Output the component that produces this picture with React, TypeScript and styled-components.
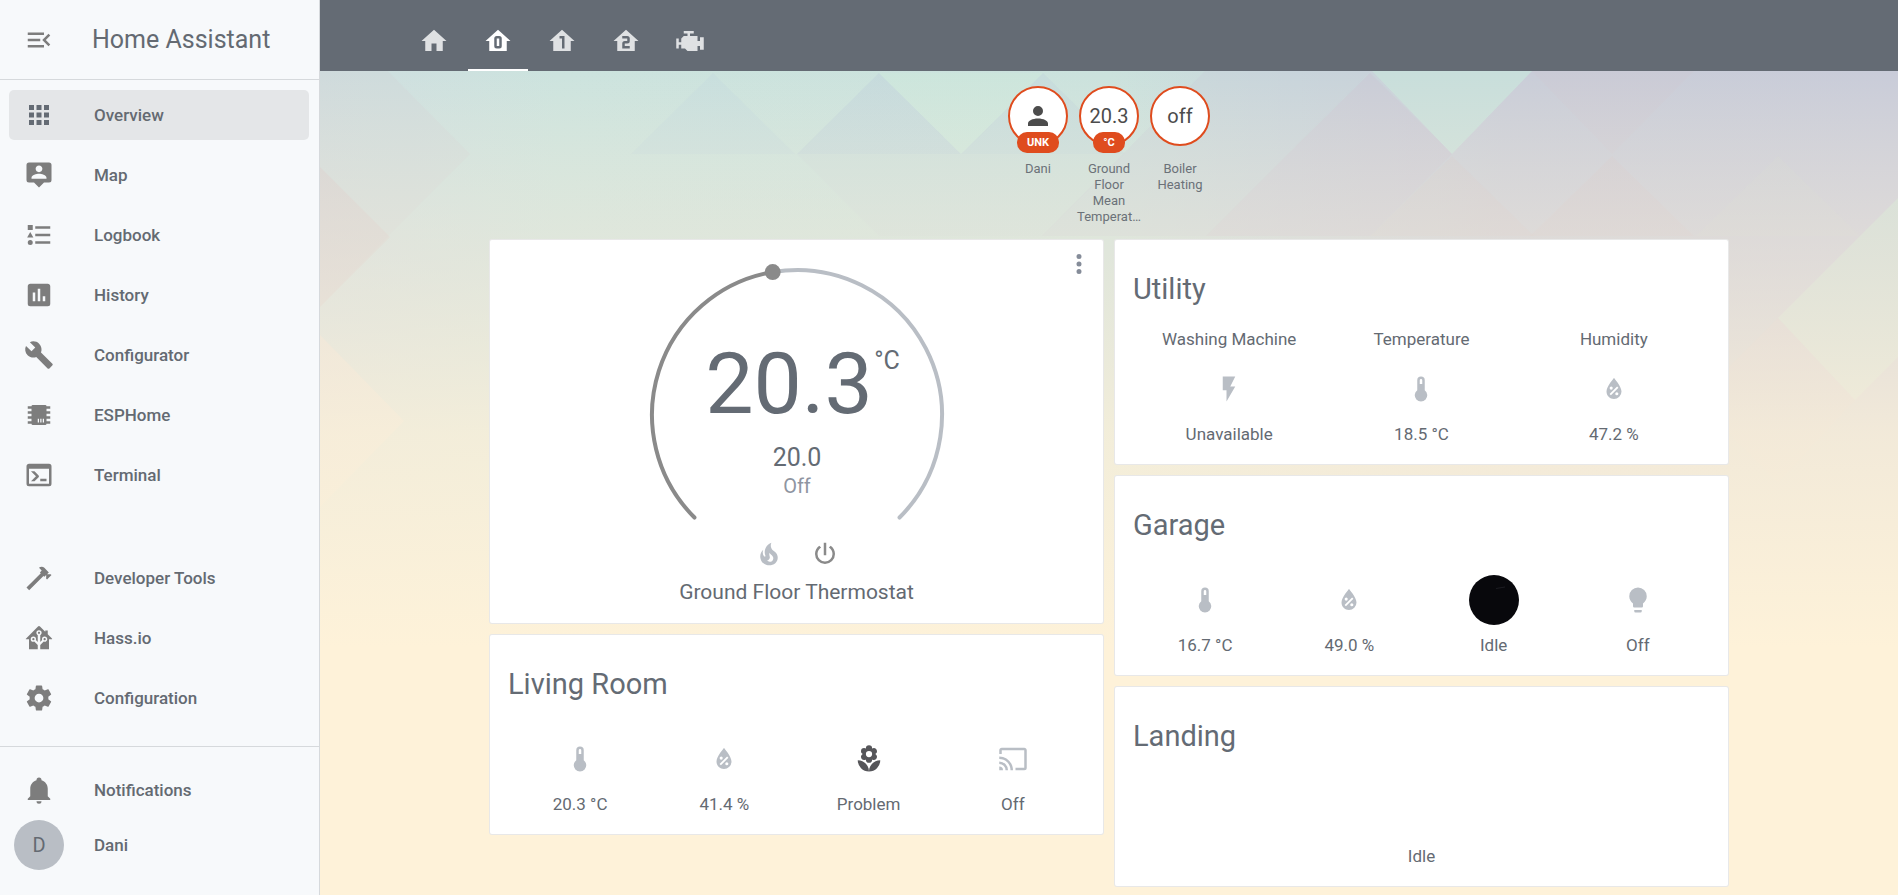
import React from "react";
import styled, { createGlobalStyle } from "styled-components";

const color = {
  text: "#646a72",
  strong: "#646b74",
  icon: "#7d7d7d",
  muted: "#b9bec5",
  header: "#646b74",
  sidebar: "#f7f9fb",
  divider: "#d6d9dc",
  accent: "#df4c1e",
};

const GlobalStyle = createGlobalStyle`
  *, *::before, *::after { box-sizing: border-box; }
  body {
    margin: 0;
    background: #fef2d9;
    color: ${color.text};
    font-family: Roboto, "Liberation Sans", sans-serif;
    -webkit-font-smoothing: antialiased;
  }
  h1, h2, p, ul { margin: 0; padding: 0; }
  ul { list-style: none; }
`;

/* ---------- icons ---------- */

const icons = {
  menuOpen:
    "M21,15.61L19.59,17L14.58,12L19.59,7L21,8.39L17.44,12L21,15.61M3,6H16V8H3V6M3,13V11H13V13H3M3,18V16H16V18H3Z",
  apps:
    "M16,20H20V16H16M16,14H20V10H16M10,8H14V4H10M16,8H20V4H16M10,14H14V10H10M4,14H8V10H4M4,20H8V16H4M10,20H14V16H10M4,8H8V4H4V8Z",
  tooltipAccount:
    "M20,2H4A2,2 0 0,0 2,4V16A2,2 0 0,0 4,18H8L12,22L16,18H20A2,2 0 0,0 22,16V4A2,2 0 0,0 20,2M12,4.3C13.5,4.3 14.7,5.5 14.7,7C14.7,8.5 13.5,9.7 12,9.7C10.5,9.7 9.3,8.5 9.3,7C9.3,5.5 10.5,4.3 12,4.3M18,15H6V14.1C6,12.1 10,11 12,11C14,11 18,12.1 18,14.1V15Z",
  listType:
    "M5,9.5L7.5,14H2.5L5,9.5M3,4H7V8H3V4M5,20A2,2 0 0,0 7,18A2,2 0 0,0 5,16A2,2 0 0,0 3,18A2,2 0 0,0 5,20M9,5V7H21V5H9M9,19H21V17H9V19M9,13H21V11H9V13Z",
  pollBox:
    "M17,17H15V13H17M13,17H11V7H13M9,17H7V10H9M19,3H5C3.89,3 3,3.89 3,5V19A2,2 0 0,0 5,21H19A2,2 0 0,0 21,19V5C21,3.89 20.1,3 19,3Z",
  wrench:
    "M22.7,19L13.6,9.9C14.5,7.6 14,4.9 12.1,3C10.1,1 7.1,0.6 4.7,1.7L9,6L6,9L1.6,4.7C0.4,7.1 0.9,10.1 2.9,12.1C4.8,14 7.5,14.5 9.8,13.6L18.9,22.7C19.3,23.1 19.9,23.1 20.3,22.7L22.6,20.4C23.1,20 23.1,19.3 22.7,19Z",
  chip:
    "M7,4H17A1,1 0 0,1 18,5H21V7H18V9H21V11H18V13H21V15H18V17H21V19H18A1,1 0 0,1 17,20H7A1,1 0 0,1 6,19H3V17H6V15H3V13H6V11H3V9H6V7H3V5H6A1,1 0 0,1 7,4M11,15V18H12V15H11M13,15V18H14V15H13M15,15V18H16V15H15Z",
  console:
    "M20,19V7H4V19H20M20,3A2,2 0 0,1 22,5V19A2,2 0 0,1 20,21H4A2,2 0 0,1 2,19V5C2,3.89 2.9,3 4,3H20M13,17V15H18V17H13M9.58,13L5.57,9H8.4L11.7,12.3C12.09,12.69 12.09,13.33 11.7,13.72L8.42,17H5.59L9.58,13Z",
  hammer:
    "M2,19.63L13.43,8.2L12.72,7.5L14.14,6.07L12,3.89C13.2,2.7 15.09,2.7 16.27,3.89L19.87,7.5L18.45,8.91H21.29L22,9.62L18.45,13.21L17.74,12.5V9.62L16.27,11.04L15.56,10.33L4.13,21.76L2,19.63Z",
  homeAssistant:
    "M21.8,13H20V21H13V17.67L15.79,14.88L16.5,15C17.66,15 18.6,14.06 18.6,12.9C18.6,11.74 17.66,10.8 16.5,10.8A2.1,2.1 0 0,0 14.4,12.9L14.5,13.61L13,15.13V9.65C13.66,9.29 14.1,8.6 14.1,7.8A2.1,2.1 0 0,0 12,5.7A2.1,2.1 0 0,0 9.9,7.8C9.9,8.6 10.34,9.29 11,9.65V15.13L9.5,13.61L9.6,12.9A2.1,2.1 0 0,0 7.5,10.8A2.1,2.1 0 0,0 5.4,12.9A2.1,2.1 0 0,0 7.5,15L8.21,14.88L11,17.67V21H4V13H2.25C1.83,13 1.42,13 1.42,12.79C1.43,12.57 1.85,12.15 2.28,11.72L11,3C11.33,2.67 11.67,2.33 12,2.33C12.33,2.33 12.67,2.67 13,3L17,7V6H19V9L21.78,11.78C22.18,12.18 22.59,12.59 22.6,12.8C22.6,13 22.2,13 21.8,13M7.5,12A0.9,0.9 0 0,1 8.4,12.9A0.9,0.9 0 0,1 7.5,13.8A0.9,0.9 0 0,1 6.6,12.9A0.9,0.9 0 0,1 7.5,12M16.5,12C17,12 17.4,12.4 17.4,12.9C17.4,13.4 17,13.8 16.5,13.8A0.9,0.9 0 0,1 15.6,12.9A0.9,0.9 0 0,1 16.5,12M12,6.9C12.5,6.9 12.9,7.3 12.9,7.8C12.9,8.3 12.5,8.7 12,8.7C11.5,8.7 11.1,8.3 11.1,7.8C11.1,7.3 11.5,6.9 12,6.9Z",
  settings:
    "M12,15.5A3.5,3.5 0 0,1 8.5,12A3.5,3.5 0 0,1 12,8.5A3.5,3.5 0 0,1 15.5,12A3.5,3.5 0 0,1 12,15.5M19.43,12.97C19.47,12.65 19.5,12.33 19.5,12C19.5,11.67 19.47,11.34 19.43,11L21.54,9.37C21.73,9.22 21.78,8.95 21.66,8.73L19.66,5.27C19.54,5.05 19.27,4.96 19.05,5.05L16.56,6.05C16.04,5.66 15.5,5.32 14.87,5.07L14.5,2.42C14.46,2.18 14.25,2 14,2H10C9.75,2 9.54,2.18 9.5,2.42L9.13,5.07C8.5,5.32 7.96,5.66 7.44,6.05L4.95,5.05C4.73,4.96 4.46,5.05 4.34,5.27L2.34,8.73C2.21,8.95 2.27,9.22 2.46,9.37L4.57,11C4.53,11.34 4.5,11.67 4.5,12C4.5,12.33 4.53,12.65 4.57,12.97L2.46,14.63C2.27,14.78 2.21,15.05 2.34,15.27L4.34,18.73C4.46,18.95 4.73,19.03 4.95,18.95L7.44,17.94C7.96,18.34 8.5,18.68 9.13,18.93L9.5,21.58C9.54,21.82 9.75,22 10,22H14C14.25,22 14.46,21.82 14.5,21.58L14.87,18.93C15.5,18.67 16.04,18.34 16.56,17.94L19.05,18.95C19.27,19.03 19.54,18.95 19.66,18.73L21.66,15.27C21.78,15.05 21.73,14.78 21.54,14.63L19.43,12.97Z",
  bell:
    "M21,19V20H3V19L5,17V11C5,7.9 7.03,5.17 10,4.29C10,4.19 10,4.1 10,4A2,2 0 0,1 12,2A2,2 0 0,1 14,4C14,4.1 14,4.19 14,4.29C16.97,5.17 19,7.9 19,11V17L21,19M14,21A2,2 0 0,1 12,23A2,2 0 0,1 10,21H14Z",
  home: "M10,20V14H14V20H19V12H22L12,3L2,12H5V20H10Z",
  floor0:
    "M12,3L2,12H5V20H19V12H22L12,3M11,8H13A2,2 0 0,1 15,10V16A2,2 0 0,1 13,18H11A2,2 0 0,1 9,16V10A2,2 0 0,1 11,8M11,10V16H13V10H11Z",
  floor1: "M12,3L2,12H5V20H19V12H22L12,3M10,8H14V18H12V10H10V8Z",
  floor2:
    "M12,3L2,12H5V20H19V12H22L12,3M9,8H13A2,2 0 0,1 15,10V12A2,2 0 0,1 13,14H11V16H15V18H9V14A2,2 0 0,1 11,12H13V10H9V8Z",
  engine:
    "M7,4V6H10V8H7L5,10V13H3V10H1V18H3V15H5V18H8L10,20H18V16H20V19H23V9H20V12H18V8H12V6H15V4H7Z",
  account:
    "M12,4A4,4 0 0,1 16,8A4,4 0 0,1 12,12A4,4 0 0,1 8,8A4,4 0 0,1 12,4M12,14C16.42,14 20,15.79 20,18V20H4V18C4,15.79 7.58,14 12,14Z",
  fire:
    "M17.66,11.2C17.43,10.9 17.15,10.64 16.89,10.38C16.22,9.78 15.46,9.35 14.82,8.72C13.33,7.26 13,4.85 13.95,3C13,3.23 12.17,3.75 11.46,4.32C8.87,6.4 7.85,10.07 9.07,13.22C9.11,13.32 9.15,13.42 9.15,13.55C9.15,13.77 9,13.97 8.8,14.05C8.57,14.15 8.33,14.09 8.14,13.93C8.08,13.88 8.04,13.83 8,13.76C6.87,12.33 6.69,10.28 7.45,8.64C5.78,10 4.87,12.3 5,14.47C5.06,14.97 5.12,15.47 5.29,15.97C5.43,16.57 5.7,17.17 6,17.7C7.08,19.43 8.95,20.67 10.96,20.92C13.1,21.19 15.39,20.8 17.03,19.32C18.86,17.66 19.5,15 18.56,12.72L18.43,12.46C18.22,12 17.66,11.2 17.66,11.2M14.5,17.5C14.22,17.74 13.76,18 13.4,18.1C12.28,18.5 11.16,17.94 10.5,17.28C11.69,17 12.4,16.12 12.61,15.23C12.78,14.43 12.46,13.77 12.33,13C12.21,12.26 12.23,11.63 12.5,10.94C12.69,11.32 12.89,11.7 13.13,12C13.9,13 15.11,13.44 15.37,14.8C15.41,14.94 15.43,15.08 15.43,15.23C15.46,16.05 15.1,16.95 14.5,17.5Z",
  power:
    "M16.56,5.44L15.11,6.89C16.84,7.94 18,9.83 18,12A6,6 0 0,1 12,18A6,6 0 0,1 6,12C6,9.83 7.16,7.94 8.88,6.88L7.44,5.44C5.36,6.88 4,9.28 4,12A8,8 0 0,0 12,20A8,8 0 0,0 20,12C20,9.28 18.64,6.88 16.56,5.44M13,3H11V13H13Z",
  flash: "M7,2V13H10V22L17,10H13L17,2H7Z",
  thermometer:
    "M15,13V5A3,3 0 0,0 9,5V13A5,5 0 1,0 15,13M12,4A1,1 0 0,1 13,5V8H11V5A1,1 0 0,1 12,4Z",
  waterPercent:
    "M12,3.25C12,3.25 6,10 6,14C6,17.32 8.69,20 12,20A6,6 0 0,0 18,14C18,10 12,3.25 12,3.25M14.47,9.97L15.53,11.03L9.53,17.03L8.47,15.97M9.75,10A1.25,1.25 0 0,1 11,11.25A1.25,1.25 0 0,1 9.75,12.5A1.25,1.25 0 0,1 8.5,11.25A1.25,1.25 0 0,1 9.75,10M14.25,14.5A1.25,1.25 0 0,1 15.5,15.75A1.25,1.25 0 0,1 14.25,17A1.25,1.25 0 0,1 13,15.75A1.25,1.25 0 0,1 14.25,14.5Z",
  flower:
    "M3,13A9,9 0 0,0 12,22C12,17 7.97,13 3,13M12,5.5A2.5,2.5 0 0,1 14.5,8A2.5,2.5 0 0,1 12,10.5A2.5,2.5 0 0,1 9.5,8A2.5,2.5 0 0,1 12,5.5M5.6,10.25A2.5,2.5 0 0,0 8.1,12.75C8.63,12.75 9.12,12.58 9.5,12.31C9.5,12.37 9.5,12.43 9.5,12.5A2.5,2.5 0 0,0 12,15A2.5,2.5 0 0,0 14.5,12.5C14.5,12.43 14.5,12.37 14.5,12.31C14.88,12.58 15.37,12.75 15.9,12.75C17.28,12.75 18.4,11.63 18.4,10.25C18.4,9.25 17.81,8.4 16.97,8C17.81,7.6 18.4,6.74 18.4,5.75C18.4,4.37 17.28,3.25 15.9,3.25C15.37,3.25 14.88,3.41 14.5,3.69C14.5,3.63 14.5,3.56 14.5,3.5A2.5,2.5 0 0,0 12,1A2.5,2.5 0 0,0 9.5,3.5C9.5,3.56 9.5,3.63 9.5,3.69C9.12,3.41 8.63,3.25 8.1,3.25A2.5,2.5 0 0,0 5.6,5.75C5.6,6.74 6.19,7.6 7.03,8C6.19,8.4 5.6,9.25 5.6,10.25M12,22A9,9 0 0,0 21,13C16,13 12,17 12,22Z",
  cast:
    "M1,10V12A9,9 0 0,1 10,21H12C12,14.92 7.07,10 1,10M1,14V16A5,5 0 0,1 6,21H8A7,7 0 0,0 1,14M1,18V21H4A3,3 0 0,0 1,18M21,3H3C1.89,3 1,3.89 1,5V8H3V5H21V19H14V21H21A2,2 0 0,0 23,19V5C23,3.89 22.1,3 21,3Z",
  lightbulb:
    "M12,2A7,7 0 0,0 5,9C5,11.38 6.19,13.47 8,14.74V17A1,1 0 0,0 9,18H15A1,1 0 0,0 16,17V14.74C17.81,13.47 19,11.38 19,9A7,7 0 0,0 12,2M9,21A1,1 0 0,0 10,22H14A1,1 0 0,0 15,21V20H9V21Z",
  dots:
    "M12,16A2,2 0 0,1 14,18A2,2 0 0,1 12,20A2,2 0 0,1 10,18A2,2 0 0,1 12,16M12,10A2,2 0 0,1 14,12A2,2 0 0,1 12,14A2,2 0 0,1 10,12A2,2 0 0,1 12,10M12,4A2,2 0 0,1 14,6A2,2 0 0,1 12,8A2,2 0 0,1 10,6A2,2 0 0,1 12,4Z",
};

type IconName = keyof typeof icons;

const IconSvg = styled.svg`
  display: block;
  flex: none;
  width: 30px;
  height: 30px;
  fill: currentColor;
`;

const Icon = ({ name }: { name: IconName }) => (
  <IconSvg viewBox="0 0 24 24" aria-hidden="true">
    <path fillRule="evenodd" d={icons[name]} />
  </IconSvg>
);

/* ---------- shell ---------- */

const Shell = styled.div`
  display: flex;
  min-height: 100vh;
`;

const Sidebar = styled.aside`
  position: sticky;
  top: 0;
  flex: none;
  display: flex;
  flex-direction: column;
  width: 320px;
  height: 100vh;
  background: ${color.sidebar};
  border-right: 1px solid ${color.divider};
`;

const SidebarHeader = styled.div`
  display: flex;
  align-items: center;
  gap: 38px;
  height: 80px;
  padding-left: 24px;
  border-bottom: 1px solid ${color.divider};
`;

const PlainButton = styled.button`
  display: flex;
  padding: 0;
  border: 0;
  background: none;
  color: ${color.icon};
  cursor: pointer;
`;

const AppName = styled.h1`
  font-size: 25px;
  font-weight: 400;
  line-height: 30px;
`;

const NavList = styled.ul<{ $grow?: boolean }>`
  display: flex;
  flex-direction: column;
  gap: 10px;
  padding: 10px 10px 0 9px;
  flex: ${(p) => (p.$grow ? 1 : "none")};
`;

const NavLink = styled.a<{ $active?: boolean }>`
  display: flex;
  align-items: center;
  gap: 40px;
  height: 50px;
  padding-left: 15px;
  border-radius: 5px;
  background: ${(p) => (p.$active ? "#e4e6e8" : "none")};
  color: ${(p) => (p.$active ? color.strong : color.icon)};
  text-decoration: none;
`;

const NavText = styled.span`
  color: ${color.text};
  font-size: 17px;
  font-weight: 500;
  line-height: 20px;
`;

const SidebarFooter = styled.div`
  margin-top: 23px;
  padding: 18px 10px 25px 9px;
  border-top: 1px solid ${color.divider};
`;

const FooterList = styled.ul`
  display: flex;
  flex-direction: column;
  gap: 5px;
`;

const UserLink = styled(NavLink)`
  gap: 30px;
  padding-left: 5px;
`;

const Avatar = styled.span`
  display: flex;
  align-items: center;
  justify-content: center;
  width: 50px;
  height: 50px;
  border-radius: 50%;
  background: ${color.muted};
  color: ${color.text};
  font-size: 20px;
`;

const Page = styled.div`
  flex: 1;
  display: flex;
  flex-direction: column;
  min-width: 0;
`;

const TopBar = styled.header`
  display: flex;
  align-items: flex-end;
  height: 71px;
  padding-left: 84px;
  background: ${color.header};
`;

const Tabs = styled.nav`
  display: flex;
  gap: 4px;
`;

const Tab = styled.button<{ $active?: boolean }>`
  display: flex;
  align-items: center;
  justify-content: center;
  width: 60px;
  height: 60px;
  padding: 2px 0 0;
  border: 0;
  border-bottom: 2px solid ${(p) => (p.$active ? "#fff" : "transparent")};
  background: none;
  color: ${(p) => (p.$active ? "#fff" : "#dfe1e3")};
  cursor: pointer;
`;

const View = styled.main`
  position: relative;
  flex: 1;
  padding: 15px 10px 5px;
`;

const Backdrop = styled.svg`
  position: absolute;
  inset: 0;
  width: 100%;
  height: 100%;
`;

/* ---------- badges ---------- */

const Badges = styled.div`
  position: relative;
  display: flex;
  justify-content: center;
  min-height: 144px;
`;

const Badge = styled.div`
  display: flex;
  flex-direction: column;
  align-items: center;
  width: 71px;
`;

const BadgeCircle = styled.div`
  position: relative;
  display: flex;
  align-items: center;
  justify-content: center;
  width: 60px;
  height: 60px;
  margin-bottom: 15px;
  border: 2px solid ${color.accent};
  border-radius: 50%;
  background: #fff;
  color: #4c4c4c;
  font-size: 20px;
`;

const BadgeLabel = styled.span`
  position: absolute;
  bottom: -9px;
  padding: 0 10px;
  border-radius: 10px;
  background: ${color.accent};
  color: #fff;
  font-size: 11px;
  font-weight: 700;
  line-height: 21px;
`;

const BadgeTitle = styled.div`
  width: 64px;
  color: #6b7178;
  font-size: 13px;
  line-height: 16px;
  text-align: center;
`;

/* ---------- cards ---------- */

const Columns = styled.div`
  position: relative;
  display: grid;
  grid-template-columns: 1fr 1fr;
  gap: 12px;
  align-items: start;
  max-width: 1238px;
  margin: 10px auto 0;
`;

const Column = styled.div`
  display: flex;
  flex-direction: column;
  gap: 12px;
`;

const Card = styled.section`
  position: relative;
  border-radius: 2px;
  background: #fff;
  box-shadow: 0 0 0 1px #e8e8e8;
`;

const CardTitle = styled.h2`
  padding: 29px 18px 20px;
  color: ${color.strong};
  font-size: 29px;
  font-weight: 400;
  line-height: 40px;
`;

const Glance = styled.div`
  display: flex;
  padding: 0 18px 19px;
`;

const Entity = styled.div`
  flex: 1;
  display: flex;
  flex-direction: column;
  align-items: center;
  font-size: 17px;
  line-height: 21px;
`;

const EntityName = styled.div`
  margin-bottom: 4px;
`;

const EntityState = styled.div``;

const EntityIcon = styled.div<{ $on?: boolean }>`
  display: flex;
  align-items: center;
  justify-content: center;
  height: 50px;
  margin: 10px 0;
  color: ${(p) => (p.$on ? "#56565a" : color.muted)};
`;

const CameraThumb = styled.svg`
  display: block;
  width: 50px;
  height: 50px;
`;

const Camera = () => (
  <CameraThumb viewBox="0 0 50 50" role="img" aria-label="Garage camera">
    <circle cx="25" cy="25" r="25" fill="#08080c" />
    <path d="M27,13.500L36,12" stroke="#1c1c22" strokeWidth="1" />
  </CameraThumb>
);

type EntityData = { name?: string; icon?: IconName; camera?: boolean; on?: boolean; state: string };

const GlanceCard = ({ title, entities }: { title: string; entities: EntityData[] }) => (
  <Card>
    <CardTitle>{title}</CardTitle>
    <Glance>
      {entities.map((e, i) => (
        <Entity key={i}>
          {e.name && <EntityName>{e.name}</EntityName>}
          <EntityIcon $on={e.on}>
            {e.icon && <Icon name={e.icon} />}
            {e.camera && <Camera />}
          </EntityIcon>
          <EntityState>{e.state}</EntityState>
        </Entity>
      ))}
    </Glance>
  </Card>
);

/* ---------- thermostat ---------- */

const ThermostatCard = styled(Card)`
  display: flex;
  flex-direction: column;
  align-items: center;
  padding: 20px 0 19px;
`;

const MoreButton = styled(PlainButton)`
  position: absolute;
  top: 0;
  right: 0;
  padding: 9px;
  color: #858c99;
`;

const Dial = styled.svg`
  display: block;
  width: 310px;
  height: 270px;
  font-family: inherit;
`;

const Modes = styled.div`
  display: flex;
  gap: 26px;
  margin-top: 9px;
`;

const ModeButton = styled(PlainButton)<{ $on?: boolean }>`
  color: ${(p) => (p.$on ? "#8a8a8a" : color.muted)};
`;

const ThermostatName = styled.div`
  margin-top: 11px;
  font-size: 21px;
  line-height: 24px;
`;

const CX = 155;
const CY = 155;
const R = 145;
const point = (deg: number) => {
  const a = (deg * Math.PI) / 180;
  return { x: CX + R * Math.sin(a), y: CY - R * Math.cos(a) };
};
const arc = (from: number, to: number) => {
  const a = point(from);
  const b = point(to);
  return `M${a.x},${a.y}A${R},${R} 0 ${to - from > 180 ? 1 : 0},1 ${b.x},${b.y}`;
};

const Thermostat = () => {
  const target = 20;
  const angle = -135 + ((target - 7) / 28) * 270;
  const knob = point(angle);
  return (
    <ThermostatCard>
      <MoreButton aria-label="More info">
        <Icon name="dots" />
      </MoreButton>
      <Dial viewBox="0 0 310 270">
        <g fill="none" strokeWidth="4" strokeLinecap="round">
          <path d={arc(angle, 135)} stroke={color.muted} />
          <path d={arc(-135, angle)} stroke="#8a8a8a" />
        </g>
        <circle cx={knob.x} cy={knob.y} r="8" fill="#8a8a8a" />
        <g textAnchor="middle" fill={color.strong}>
          <text x="147" y="153" fontSize="86">20.3</text>
          <text x="245" y="109" fontSize="25">°C</text>
          <text x="155" y="206" fontSize="25">20.0</text>
          <text x="155" y="233" fontSize="20" fill="#8f95a1">Off</text>
        </g>
      </Dial>
      <Modes>
        <ModeButton aria-label="Heat">
          <Icon name="fire" />
        </ModeButton>
        <ModeButton $on aria-label="Off">
          <Icon name="power" />
        </ModeButton>
      </Modes>
      <ThermostatName>Ground Floor Thermostat</ThermostatName>
    </ThermostatCard>
  );
};

/* ---------- data ---------- */

const mainNav: [IconName, string][] = [
  ["apps", "Overview"],
  ["tooltipAccount", "Map"],
  ["listType", "Logbook"],
  ["pollBox", "History"],
  ["wrench", "Configurator"],
  ["chip", "ESPHome"],
  ["console", "Terminal"],
];

const toolsNav: [IconName, string][] = [
  ["hammer", "Developer Tools"],
  ["homeAssistant", "Hass.io"],
  ["settings", "Configuration"],
];

const tabs: [IconName, string][] = [
  ["home", "Home"],
  ["floor0", "Ground floor"],
  ["floor1", "First floor"],
  ["floor2", "Second floor"],
  ["engine", "System"],
];

const NavItem = ({ icon, label, active }: { icon: IconName; label: string; active?: boolean }) => (
  <li>
    <NavLink href="#" $active={active}>
      <Icon name={icon} />
      <NavText>{label}</NavText>
    </NavLink>
  </li>
);

const Scenery = () => (
  <Backdrop viewBox="0 0 1578 824" preserveAspectRatio="none" aria-hidden="true">
    <defs>
      <linearGradient id="hues" x1="0" x2="1" y1="0" y2="0">
        <stop offset="0" stopColor="#cfdee0" />
        <stop offset="0.15" stopColor="#cce3de" />
        <stop offset="0.5" stopColor="#cbe2dd" />
        <stop offset="0.62" stopColor="#c9d6dc" />
        <stop offset="0.75" stopColor="#c9cdd8" />
        <stop offset="1" stopColor="#c9ccd9" />
      </linearGradient>
      <linearGradient id="warmth" x1="0" x2="0" y1="0" y2="1">
        <stop offset="0" stopColor="#fef2d9" stopOpacity="0" />
        <stop offset="0.22" stopColor="#f5ead9" stopOpacity="0.5" />
        <stop offset="0.44" stopColor="#fbf0d9" stopOpacity="0.82" />
        <stop offset="0.7" stopColor="#fef2d9" stopOpacity="1" />
        <stop offset="1" stopColor="#fef2d9" stopOpacity="1" />
      </linearGradient>
    </defs>
    <rect width="1578" height="824" fill="url(#hues)" />
    <path d="M0,0H68L150,83L68,165L0,236Z" fill="#cfd4d8" fillOpacity="0.4" />
    <path d="M0,96L70,166L0,236Z" fill="#d8b8bc" fillOpacity="0.25" />
    <path d="M0,264L84,350L0,436Z" fill="#ffe2d4" fillOpacity="0.4" />
    <path d="M393,2L475,83L311,83Z" fill="#c4d9df" fillOpacity="0.4" />
    <path d="M559,2L641,83L477,83Z" fill="#c2d5dc" fillOpacity="0.6" />
    <path d="M723,2L805,83L641,83Z" fill="#c2d5dc" fillOpacity="0.5" />
    <path d="M477,83H805L723,165H559Z" fill="#c9d8da" fillOpacity="0.3" />
    <path d="M559,2H723L641,83Z" fill="#cdeadd" fillOpacity="0.4" />
    <path d="M885,0H1050L968,83L886,165H722Z" fill="#c8d2da" fillOpacity="0.5" />
    <path d="M1050,2L1132,83L1050,165H886L968,83Z" fill="#cac6d3" fillOpacity="0.5" />
    <path d="M1052,0H1212L1132,83Z" fill="#c8dedb" fillOpacity="0.95" />
    <path d="M1212,0H1374L1292,83Z" fill="#cdc6d2" fillOpacity="0.3" />
    <path d="M1132,85L1214,165H1050Z" fill="#d5bcbf" fillOpacity="0.15" />
    <path d="M1292,85L1374,165H1210Z" fill="#d5bcbf" fillOpacity="0.15" />
    <path d="M1458,85L1540,165H1376Z" fill="#cfdcd2" fillOpacity="0.15" />
    <path d="M1578,127L1458,247L1535,329L1578,286Z" fill="#cdeed6" fillOpacity="0.45" />
    <path d="M1458,247L1535,329L1458,412L1376,329Z" fill="#e8c8c0" fillOpacity="0.15" />
    <rect width="1578" height="824" fill="url(#warmth)" />
  </Backdrop>
);

export default function App() {
  return (
    <>
      <GlobalStyle />
      <Shell>
        <Sidebar>
          <SidebarHeader>
            <PlainButton aria-label="Close menu">
              <Icon name="menuOpen" />
            </PlainButton>
            <AppName>Home Assistant</AppName>
          </SidebarHeader>
          <NavList $grow>
            {mainNav.map(([icon, label]) => (
              <NavItem key={label} icon={icon} label={label} active={label === "Overview"} />
            ))}
          </NavList>
          <NavList>
            {toolsNav.map(([icon, label]) => (
              <NavItem key={label} icon={icon} label={label} />
            ))}
          </NavList>
          <SidebarFooter>
            <FooterList>
              <NavItem icon="bell" label="Notifications" />
              <li>
                <UserLink href="#">
                  <Avatar>D</Avatar>
                  <NavText>Dani</NavText>
                </UserLink>
              </li>
            </FooterList>
          </SidebarFooter>
        </Sidebar>
        <Page>
          <TopBar>
            <Tabs>
              {tabs.map(([icon, label]) => (
                <Tab key={label} aria-label={label} $active={icon === "floor0"}>
                  <Icon name={icon} />
                </Tab>
              ))}
            </Tabs>
          </TopBar>
          <View>
            <Scenery />
            <Badges>
              <Badge>
                <BadgeCircle>
                  <Icon name="account" />
                  <BadgeLabel>UNK</BadgeLabel>
                </BadgeCircle>
                <BadgeTitle>Dani</BadgeTitle>
              </Badge>
              <Badge>
                <BadgeCircle>
                  20.3
                  <BadgeLabel>°C</BadgeLabel>
                </BadgeCircle>
                <BadgeTitle>Ground Floor Mean Temperat…</BadgeTitle>
              </Badge>
              <Badge>
                <BadgeCircle>off</BadgeCircle>
                <BadgeTitle>Boiler Heating</BadgeTitle>
              </Badge>
            </Badges>
            <Columns>
              <Column>
                <Thermostat />
                <GlanceCard
                  title="Living Room"
                  entities={[
                    { icon: "thermometer", state: "20.3 °C" },
                    { icon: "waterPercent", state: "41.4 %" },
                    { icon: "flower", on: true, state: "Problem" },
                    { icon: "cast", state: "Off" },
                  ]}
                />
              </Column>
              <Column>
                <GlanceCard
                  title="Utility"
                  entities={[
                    { name: "Washing Machine", icon: "flash", state: "Unavailable" },
                    { name: "Temperature", icon: "thermometer", state: "18.5 °C" },
                    { name: "Humidity", icon: "waterPercent", state: "47.2 %" },
                  ]}
                />
                <GlanceCard
                  title="Garage"
                  entities={[
                    { icon: "thermometer", state: "16.7 °C" },
                    { icon: "waterPercent", state: "49.0 %" },
                    { camera: true, state: "Idle" },
                    { icon: "lightbulb", state: "Off" },
                  ]}
                />
                <GlanceCard title="Landing" entities={[{ state: "Idle" }]} />
              </Column>
            </Columns>
          </View>
        </Page>
      </Shell>
    </>
  );
}
